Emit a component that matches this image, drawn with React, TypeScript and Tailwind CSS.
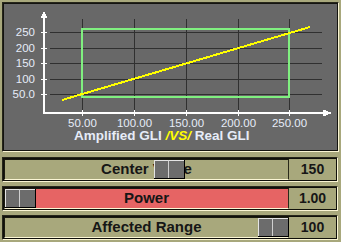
import { type ReactNode } from 'react';

const GRID_Y = [32, 48, 63, 79, 94];
const Y_LABELS = ['250', '200', '150', '100', '50.0'];
const GRID_X = [82, 134, 186, 238, 289];
const X_LABELS = ['50.00', '100.00', '150.00', '200.00', '250.00'];

const Chart = () => (
  <svg width={333} height={124} viewBox="4 4 333 124" className="block" shapeRendering="crispEdges">
    {GRID_Y.map((y) => (
      <line key={y} x1={50} x2={322} y1={y + 0.5} y2={y + 0.5} stroke="#303030" strokeWidth={1} />
    ))}
    {GRID_X.map((x) => (
      <line key={x} x1={x + 0.5} x2={x + 0.5} y1={19} y2={112} stroke="#303030" strokeWidth={1} />
    ))}
    {/* axes */}
    <line x1={44} x2={44} y1={15} y2={114} stroke="#ffffff" strokeWidth={2} />
    <line x1={43} x2={324} y1={113} y2={113} stroke="#ffffff" strokeWidth={2} />
    <polygon points="44,11 40.5,18 47.5,18" fill="#ffffff" />
    <polygon points="332,113 323,109.5 323,116.5" fill="#ffffff" />
    {GRID_Y.map((y) => (
      <line key={'t' + y} x1={41} x2={47} y1={y + 0.5} y2={y + 0.5} stroke="#ffffff" strokeWidth={1} />
    ))}
    {GRID_X.map((x) => (
      <line key={'t' + x} x1={x + 0.5} x2={x + 0.5} y1={110} y2={116} stroke="#ffffff" strokeWidth={1} />
    ))}
    {/* range box + curve */}
    <rect x={82} y={29} width={207} height={68} fill="none" stroke="#80f080" strokeWidth={2} />
    <line x1={62} y1={100} x2={310} y2={27} stroke="#ffff00" strokeWidth={2} />
    <g fontFamily='"Liberation Sans", Arial, sans-serif' fontSize={11.5} fill="#e6ecf8">
      {Y_LABELS.map((t, i) => (
        <text key={t} x={35} y={GRID_Y[i] + 3.5} textAnchor="end">
          {t}
        </text>
      ))}
      {X_LABELS.map((t, i) => (
        <text key={t} x={GRID_X[i] + 0.5} y={127} textAnchor="middle">
          {t}
        </text>
      ))}
    </g>
  </svg>
);

const Thumb = () => (
  <div className="flex h-full border-b border-r border-black">
    <div className="h-full w-[15px] border-l border-t border-r border-l-[#e4e4e4] border-t-[#e4e4e4] border-r-[#d0d0d0] bg-[#6c6c6c]" />
    <div className="h-full w-[15px] border-t border-t-[#e4e4e4] bg-[#6c6c6c]" />
  </div>
);

type RowProps = {
  label: string;
  value: string;
  thumbLeft: number;
  fill?: boolean;
  children?: ReactNode;
};

const SliderRow = ({ label, value, thumbLeft, fill }: RowProps) => (
  <div className="mr-[1px] h-[25px] border border-l-[#26261a] border-t-[#26261a] border-b-[#fbf6d4] border-r-[#fbf6d4]">
    <div className="flex h-full border border-[#10100a]">
      <div className="relative h-full w-[285px] border border-l-[#1a1a10] border-t-[#1a1a10] border-b-[#fbf6d4] border-r-[#2a2a1a]">
        {fill ? <div className="absolute inset-y-0 right-0 left-[31px] bg-[#e66464]" /> : null}
        <div className="relative flex h-full items-center justify-center text-[15px] font-bold text-[#161616]">
          {label}
        </div>
        <div className="absolute top-0 bottom-0" style={{ left: thumbLeft }}>
          <Thumb />
        </div>
      </div>
      <div className="flex flex-1 items-center justify-center text-[14px] font-bold text-[#161616]">{value}</div>
    </div>
  </div>
);

export default function App() {
  return (
    <div
      className="flex h-[242px] w-[341px] flex-col overflow-hidden bg-[#a8a87c] px-[2px] pt-[2px]"
      style={{ fontFamily: '"Liberation Sans", Arial, sans-serif' }}
    >
      <div className="h-[150px] border border-l-[#26261a] border-t-[#26261a] border-b-[#fbf6d4] border-r-[#fbf6d4]">
        <div className="h-full border border-[#141410] bg-[#686868]">
          <Chart />
          <div className="pl-[70px] text-[13.5px] leading-[16px] font-bold text-[#e6ecf8]">
            Amplified GLI <span className="italic text-[#ffff00]">/VS/</span> Real GLI
          </div>
        </div>
      </div>
      <div className="mt-[5px] flex flex-col gap-[4px]">
        <SliderRow label="Center Value" value="150" thumbLeft={149} />
        <SliderRow label="Power" value="1.00" thumbLeft={0} fill />
        <SliderRow label="Affected Range" value="100" thumbLeft={253} />
      </div>
    </div>
  );
}
